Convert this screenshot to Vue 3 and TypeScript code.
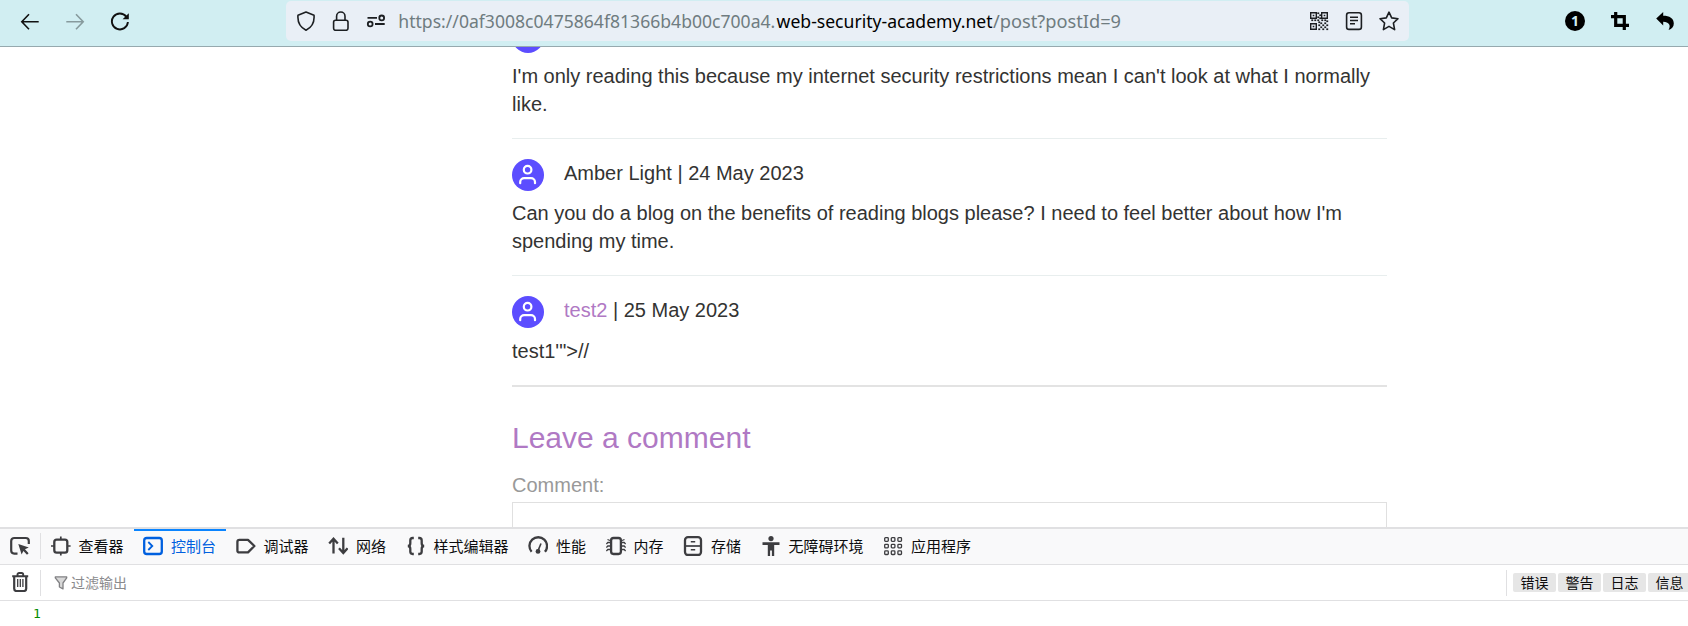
<script setup lang="ts">
interface Comment {
  author: string
  link: boolean
  date: string
  body: string
}

interface Tab {
  id: string
  label: string
}

const comments: Comment[] = [
  { author: '', link: false, date: '', body: "I'm only reading this because my internet security restrictions mean I can't look at what I normally like." },
  { author: 'Amber Light', link: false, date: '24 May 2023', body: "Can you do a blog on the benefits of reading blogs please? I need to feel better about how I'm spending my time." },
  { author: 'test2', link: true, date: '25 May 2023', body: 'test1\'">//' },
]

const tabs: Tab[] = [
  { id: 'inspector', label: '查看器' },
  { id: 'console', label: '控制台' },
  { id: 'debugger', label: '调试器' },
  { id: 'network', label: '网络' },
  { id: 'style', label: '样式编辑器' },
  { id: 'performance', label: '性能' },
  { id: 'memory', label: '内存' },
  { id: 'storage', label: '存储' },
  { id: 'accessibility', label: '无障碍环境' },
  { id: 'application', label: '应用程序' },
]

const activeTab = 'console'
const filters: string[] = ['错误', '警告', '日志', '信息']

const cells: number[][] = [0, 1, 2].flatMap((r) => [0, 1, 2].map((c) => [c * 6.6 + 1.7, r * 6.6 + 1.7]))

const qrDots: number[][] = [
  [8, 1], [8, 5], [10, 3], [8, 8], [10, 6], [2, 8], [5, 8], [12, 8], [15, 8], [17, 9],
  [11, 11], [15, 11], [13, 13], [17, 13], [11, 15], [15, 15], [13, 17], [17, 17], [9, 13], [9, 17], [9, 10],
]
</script>

<template>
  <div class="window">
    <header class="toolbar">
      <nav class="nav">
        <svg class="ico" viewBox="0 0 20 20"><path d="M18.7 10.7H2M9 3.2L1.8 10.7L9 18.2" fill="none" stroke="#111" stroke-width="1.6" /></svg>
        <svg class="ico" viewBox="0 0 20 20"><path d="M1.3 10.7H18M11 3.2L18.2 10.7L11 18.2" fill="none" stroke="#879a9d" stroke-width="1.6" /></svg>
        <svg class="ico" viewBox="0 0 20 20">
          <path d="M16.3 5.6A8 8 0 1 0 17.9 11" fill="none" stroke="#111" stroke-width="1.9" />
          <path d="M18.8 2.2V8.3H12.6Z" fill="#111" />
        </svg>
      </nav>

      <div class="urlbar">
        <svg class="ico" viewBox="0 0 20 20"><path d="M10 1L18 4.2C18.6 10.5 16 16.2 10 19.2C4 16.2 1.4 10.5 2 4.2Z" fill="none" stroke="#1c1f22" stroke-width="1.6" stroke-linejoin="round" /></svg>
        <svg class="ico" viewBox="0 0 20 20">
          <rect x="2.6" y="9.3" width="14.4" height="10" rx="2" fill="none" stroke="#1c1f22" stroke-width="1.6" />
          <path d="M5.6 9V5.2a4.2 4.2 0 0 1 8.4 0V9" fill="none" stroke="#1c1f22" stroke-width="1.6" />
        </svg>
        <svg class="ico" viewBox="0 0 20 20" fill="none" stroke="#1c1f22" stroke-width="1.8">
          <path d="M1.5 6.9H11M9 13H18.7" />
          <circle cx="15.7" cy="6.9" r="2.4" />
          <circle cx="4.2" cy="13" r="2.4" />
        </svg>
        <svg class="address" width="724" height="40" viewBox="0 0 724 40">
          <text x="-0.7" y="26.5" textLength="377" lengthAdjust="spacingAndGlyphs" class="dim">https://0af3008c0475864f81366b4b00c700a4.</text>
          <text x="377.6" y="26.5" textLength="216" lengthAdjust="spacingAndGlyphs" class="host">web-security-academy.net</text>
          <text x="594" y="26.5" textLength="128" lengthAdjust="spacingAndGlyphs" class="dim">/post?postId=9</text>
        </svg>
        <div class="page-actions">
          <svg class="ico" viewBox="0 0 20 20">
            <g transform="translate(1 1)" fill="#1c1f22">
              <path fill-rule="evenodd" d="M0 0h7v7H0zM1.4 1.4v4.2h4.2V1.4zM11 0h7v7h-7zM12.4 1.4v4.2h4.2V1.4zM0 11h7v7H0zM1.4 12.4v4.2h4.2v-4.2z" />
              <path d="M2.7 2.7h1.6v1.6H2.7zM13.7 2.7h1.6v1.6h-1.6zM2.7 13.7h1.6v1.6H2.7z" />
              <rect v-for="(d, i) in qrDots" :key="i" :x="d[0] - 0.7" :y="d[1] - 0.6" width="1.9" height="1.7" />
            </g>
          </svg>
          <svg class="ico" viewBox="0 0 20 20" fill="none" stroke="#1c1f22" stroke-width="1.6">
            <rect x="2.6" y="1.8" width="14.8" height="16.6" rx="2.4" />
            <path d="M6 6.3H14M6 9.5H14M6 12.7H11" stroke-width="1.4" />
          </svg>
          <svg class="ico" viewBox="0 0 20 20"><path d="M10 1.2L12.7 6.9L19 7.7L14.4 12L15.6 18.6L10 15.4L4.4 18.6L5.6 12L1 7.7L7.3 6.9Z" fill="none" stroke="#1c1f22" stroke-width="1.6" stroke-linejoin="round" /></svg>
        </div>
      </div>

      <div class="extensions">
        <span class="badge">1</span>
        <svg class="ico" viewBox="0 0 20 20"><path d="M5.7 1V14.3H19M1 5.7H14.3V19" fill="none" stroke="#000" stroke-width="3.2" /></svg>
        <svg class="ico" viewBox="0 0 20 20"><path d="M1.2 7.6L8.2 1V4.8C14.5 4.8 18.8 7.4 18.8 12.5C18.8 15.6 17 18 13.6 19C16.2 14.2 14 10.9 8.2 10.7V14.4Z" fill="#000" /></svg>
      </div>
    </header>

    <main class="page">
      <div class="article">
        <section v-for="(c, i) in comments" :key="i" class="comment">
          <div class="meta">
            <svg class="avatar" viewBox="0 0 32 32">
              <circle cx="16" cy="16" r="16" fill="#5c4dff" />
              <g fill="none" stroke="#fff" stroke-width="2.2" stroke-linecap="round">
                <circle cx="15.6" cy="10.7" r="3.8" />
                <path d="M8.2 24.2V23a4 4 0 0 1 4-3.9h6.8a4 4 0 0 1 4 3.9v1.2" />
              </g>
            </svg>
            <span v-if="c.author"><span :class="{ link: c.link }">{{ c.author }}</span> | {{ c.date }}</span>
          </div>
          <p class="body">{{ c.body }}</p>
        </section>
        <h2 class="title">Leave a comment</h2>
        <label class="label">Comment:</label>
        <div class="textarea"></div>
      </div>
    </main>

    <section class="devtools">
      <div class="tabbar">
        <div class="picker">
          <svg class="ico" viewBox="0 0 20 20">
            <path d="M7.5 17.6H4.2A3 3 0 0 1 1.2 14.6V5A3 3 0 0 1 4.2 2H15.8A3 3 0 0 1 18.8 5V8" fill="none" stroke="#3d3d40" stroke-width="2.2" />
            <path d="M8.3 8L18.8 11.6L15 13.3L18.6 17.3L17 18.8L13.4 15L11.6 18.4Z" fill="#3d3d40" />
          </svg>
        </div>
        <div v-for="t in tabs" :key="t.id" class="tab" :class="{ active: t.id === activeTab }">
          <svg class="ico" viewBox="0 0 20 20" fill="none" stroke="currentColor" stroke-width="2.3">
            <template v-if="t.id === 'inspector'">
              <rect x="3.3" y="3.6" width="13" height="13" rx="2.4" />
              <path d="M9.8 .5V3.5M9.8 16.5V19.5M0 10H3.2M16.4 10H19.6" stroke-width="1.7" />
            </template>
            <template v-else-if="t.id === 'console'">
              <rect x="1.2" y="2" width="17.6" height="16" rx="2.6" />
              <path d="M5.3 6L9.3 10L5.3 14" stroke-width="1.8" />
            </template>
            <path v-else-if="t.id === 'debugger'" d="M3.4 3.8H12L18.4 10L12 16.4H3.4A2 2 0 0 1 1.4 14.4V5.8A2 2 0 0 1 3.4 3.8Z" stroke-linejoin="round" />
            <path v-else-if="t.id === 'network'" d="M5.5 17.5V3M1.2 7.5L5.5 2.7L9.8 7.5M15.3 1.8V16.5M11 12.2L15.3 17L19.6 12.2" />
            <path v-else-if="t.id === 'style'" d="M7.8 2H6.7Q4.3 2 4.3 4.4V7.2Q4.3 10 1.8 10Q4.3 10 4.3 12.8V15.6Q4.3 18 6.7 18H7.8M12.2 2H13.3Q15.7 2 15.7 4.4V7.2Q15.7 10 18.2 10Q15.7 10 15.7 12.8V15.6Q15.7 18 13.3 18H12.2" />
            <template v-else-if="t.id === 'performance'">
              <path d="M3.6 15.8A8.8 8.8 0 1 1 16.9 15.8" />
              <path d="M10.2 14.4L13 7.5" stroke-width="1.6" />
              <circle cx="10" cy="15.4" r="2.4" fill="currentColor" stroke="none" />
            </template>
            <template v-else-if="t.id === 'memory'">
              <rect x="5.1" y="2" width="9.8" height="16" rx="2.4" />
              <path d="M4 6.5H1.8L.4 8M4 10H1.8L.4 11.5M4 13.5H1.8L.4 15M16 6.5H18.2L19.6 8M16 10H18.2L19.6 11.5M16 13.5H18.2L19.6 15M4 4.5L1.5 3.5M16 4.5L18.5 3.5" stroke-width="1.3" />
            </template>
            <template v-else-if="t.id === 'storage'">
              <rect x="2" y="1.2" width="16" height="17.8" rx="3" />
              <path d="M2 10H18" stroke-width="1.7" />
              <path d="M7.8 5.8H12.2M7.8 13.8H12.2" stroke-width="1.5" />
            </template>
            <g v-else-if="t.id === 'accessibility'" fill="currentColor" stroke="none">
              <circle cx="10" cy="2.6" r="2.6" />
              <path d="M1.5 6.2H18.5V9H13.2V20H10.9V14.5H9.1V20H6.8V9H1.5Z" />
            </g>
            <template v-else>
              <rect v-for="(p, i) in cells" :key="i" :x="p[0]" :y="p[1]" width="3.6" height="3.6" rx=".8" stroke-width="1.3" />
            </template>
          </svg>
          <span>{{ t.label }}</span>
        </div>
      </div>

      <div class="filterbar">
        <div class="trash">
          <svg class="ico" viewBox="0 0 20 20" fill="none" stroke="#3d3d40">
            <path d="M2.2 4.2H18.2M7.5 3.6V2.6A1.6 1.6 0 0 1 9.1 1H11.6A1.6 1.6 0 0 1 13.2 2.6V3.6" stroke-width="1.9" />
            <path d="M4.2 5V16.8A2.2 2.2 0 0 0 6.4 19H14A2.2 2.2 0 0 0 16.2 16.8V5" stroke-width="2.2" />
            <path d="M7.7 7V15M10.3 7V15M12.9 7V15" stroke-width="1.3" />
          </svg>
        </div>
        <svg class="funnel" viewBox="0 0 14 14"><path d="M1.3 .9H12.7V1.9L9 7V12.9L5.4 11V7L1.3 1.9Z" fill="#d8d8d8" stroke="#808083" stroke-width="1.3" stroke-linejoin="round" /></svg>
        <span class="placeholder">过滤输出</span>
        <div class="filters">
          <span v-for="f in filters" :key="f" class="filter">{{ f }}</span>
        </div>
      </div>

      <div class="output">1</div>
    </section>
  </div>
</template>

<style>
html,
body {
  overflow: hidden;
}
</style>

<style scoped>
.window {
  display: flex;
  flex-direction: column;
  width: 1688px;
  height: 626px;
  overflow: hidden;
  background: #fff;
  font-family: "Liberation Sans", "Noto Sans CJK SC", sans-serif;
}
.ico {
  display: block;
  flex: none;
  width: 20px;
  height: 20px;
}
.toolbar {
  display: flex;
  flex: none;
  box-sizing: border-box;
  height: 47px;
  padding-top: 1px;
  background: #d1eef2;
  border-bottom: 1px solid #96a9ae;
}
.nav {
  display: flex;
  align-items: center;
  gap: 25px;
  width: 266px;
  height: 40px;
  padding-left: 20px;
}
.urlbar {
  display: flex;
  align-items: center;
  gap: 15px;
  box-sizing: border-box;
  width: 1123px;
  height: 40px;
  padding: 0 10px;
  background: #e9eff6;
  border-radius: 5px;
}
.address {
  display: block;
  flex: none;
  margin-left: -2px;
  overflow: visible;
  font-family: "Noto Sans", "Open Sans", sans-serif;
  font-size: 18px;
}
.dim {
  fill: #6f7c80;
}
.host {
  fill: #000;
}
.page-actions {
  display: flex;
  gap: 15px;
  margin-left: auto;
}
.extensions {
  display: flex;
  align-items: center;
  gap: 25px;
  height: 40px;
  margin-left: 156px;
}
.badge {
  width: 20px;
  height: 20px;
  border-radius: 50%;
  background: #000;
  color: #d1eef2;
  font: 700 14px/20px "Noto Sans", sans-serif;
  text-align: center;
}
.page {
  flex: none;
  height: 480px;
  overflow: hidden;
  color: #333332;
  font-size: 20px;
  line-height: 28px;
}
.article {
  width: 875px;
  margin: -46px 0 0 512px;
}
.comment {
  padding: 20px 0;
  border-bottom: 1px solid #e8eeee;
}
.comment:nth-child(3) {
  border-bottom: 2px solid #e3e3e3;
}
.meta {
  display: flex;
  gap: 20px;
  height: 32px;
}
.avatar {
  display: block;
  flex: none;
  width: 32px;
  height: 32px;
}
.link {
  color: #b079c4;
}
.body {
  margin: 8.5px 0 0;
}
.title {
  margin: 30px 0 0;
  color: #b079c4;
  font-size: 30px;
  font-weight: 400;
  line-height: 42px;
}
.label {
  display: block;
  margin-top: 12.5px;
  color: #999;
}
.textarea {
  box-sizing: border-box;
  height: 80px;
  margin-top: 3px;
  border: 1px solid #e0e0e0;
}
.devtools {
  flex: 1;
  border-top: 2px solid #e0e0e2;
  font-family: "Noto Sans CJK SC", sans-serif;
}
.tabbar {
  display: flex;
  box-sizing: border-box;
  height: 36px;
  background: #f9f9fa;
  border-bottom: 1px solid #e0e0e2;
}
.picker {
  box-sizing: border-box;
  width: 31px;
  height: 26px;
  margin: 4px 0.4px 0 10px;
  padding-top: 3px;
  border-right: 1px solid #e0e0e2;
}
.tab {
  display: flex;
  align-items: center;
  gap: 7.5px;
  box-sizing: border-box;
  height: 35px;
  padding: 0 10.4px 2px 9.6px;
  color: #3d3d40;
  font-size: 15px;
  line-height: 20px;
  white-space: nowrap;
}
.tab span {
  color: #0c0c0d;
}
.tab.active,
.tab.active span {
  color: #0060df;
}
.tab.active {
  box-shadow: inset 0 2px 0 #0a84ff;
}
.filterbar {
  display: flex;
  align-items: center;
  box-sizing: border-box;
  height: 36px;
  border-bottom: 1px solid #e0e0e2;
}
.trash {
  display: flex;
  align-items: center;
  box-sizing: border-box;
  width: 31px;
  height: 26px;
  margin-left: 10px;
  padding-bottom: 2px;
  border-right: 1px solid #e0e0e2;
}
.funnel {
  width: 14px;
  height: 14px;
  margin: 0 3px 0 13px;
}
.placeholder {
  padding-bottom: 2px;
  color: #8a8a8d;
  font-size: 14px;
  line-height: 20px;
}
.filters {
  display: flex;
  align-items: center;
  gap: 2px;
  box-sizing: border-box;
  width: 182px;
  height: 26px;
  margin-left: auto;
  padding-left: 6px;
  overflow: hidden;
  border-left: 1px solid #e0e0e2;
}
.filter {
  flex: none;
  box-sizing: border-box;
  width: 43px;
  height: 19px;
  border-radius: 2px;
  background: #e6e6e6;
  color: #0c0c0d;
  font-size: 14px;
  line-height: 18px;
  text-align: center;
}
.output {
  padding: 5px 0 0 33px;
  color: #058b00;
  font: 13px/16px "DejaVu Sans Mono", monospace;
}
</style>
